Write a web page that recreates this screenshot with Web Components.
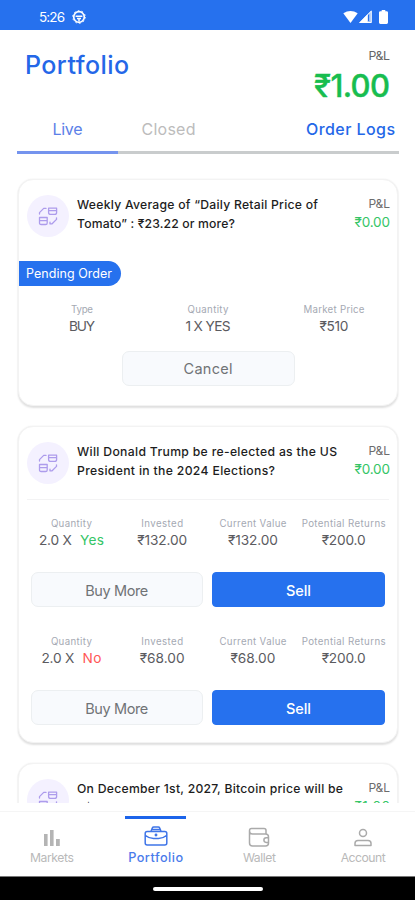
<!DOCTYPE html>
<html lang="en"><head><meta charset="utf-8"><title>Portfolio</title>
<style>html,body{margin:0;background:#fff}body{font-family:Inter,"Noto Sans",sans-serif;width:415px;height:900px;overflow:hidden}</style></head>
<body><portfolio-app></portfolio-app>
<script>
const make=(name,html,after)=>customElements.define(name,class extends HTMLElement{
  connectedCallback(){
    if(this.shadowRoot)return;
    const r=this.attachShadow({mode:'open'});
    const t=document.createElement('template');
    t.innerHTML=typeof html==='function'?html(this):html;
    r.append(t.content.cloneNode(true));
    if(after)after(this,r);
  }});
// One line of text tracked to a given width
make('fit-text',`<style>:host{display:block;white-space:nowrap;flex:none}span{display:inline-block}</style><span><slot></slot></span>`,(h,r)=>{
  const w=+h.getAttribute('w'),s=r.querySelector('span'),n=h.textContent.length;
  h.style.width=w+'px';
  const nat=s.getBoundingClientRect().width;
  if(n>1)s.style.letterSpacing=((w-nat)/(n-1)).toFixed(3)+'px';
});
make('status-bar',`<style>:host{display:flex;box-sizing:border-box;height:30px;background:#2671ee;color:#fff;padding:3px 27px 0 39px;align-items:center;justify-content:space-between;font-size:13.5px;line-height:20px}
div{display:flex;align-items:center}svg{display:block}</style>
<div style="gap:7px"><fit-text w="26">5:26</fit-text><svg width="14" height="14" viewBox="0 0 14 14" fill="none" stroke="#fff"><circle cx="7" cy="7" r="5.3" stroke-width="1.7"/><circle cx="7" cy="7" r="6.3" stroke-width="1" stroke-dasharray="1.6 2.35"/><path d="M3.6 6.2h6.8M5 8.6h4M7 8.6v3" stroke-width="1.5"/></svg></div>
<div style="gap:1px"><svg width="15" height="14" viewBox="0 0 15 14"><path fill="#fff" d="M.3 3.2Q7.5-1.3 14.7 3.2L7.5 13z"/></svg><svg width="13" height="13" viewBox="0 0 13 13"><path fill="#fff" fill-opacity=".55" d="M0 13 12.7 0V13z"/><path fill="#fff" d="M0 13 8.6 4.2V13z"/><path fill="none" stroke="#fff" d="M1.2 12.5 12.2 1.2v11.3z"/><path stroke="#2671ee" d="M9.5 4.6v6.4"/></svg><svg style="margin-left:6px" width="9" height="14" viewBox="0 0 9 14"><path fill="#fff" d="M2.7 0h3.6v1.2H7.6Q9 1.2 9 2.6v10Q9 14 7.6 14H1.4Q0 14 0 12.6v-10Q0 1.2 1.4 1.2h1.3z"/></svg></div>`);
make('page-head',`<style>:host{display:flex;justify-content:space-between;height:80px;padding:0 25px;box-sizing:border-box}
.t{color:#2467e8;font-size:25px;font-weight:500;line-height:30px;margin-top:19.5px}
.r{display:flex;flex-direction:column;align-items:flex-end}.p{color:#666;font-size:12.3px;line-height:16px;margin-top:18px}.v{color:#18bd4f;font-size:31px;font-weight:500;-webkit-text-stroke:.4px #18bd4f;line-height:36px;margin-top:4px}</style>
<fit-text class="t" w="104">Portfolio</fit-text><div class="r"><fit-text class="p" w="21.5">P&amp;L</fit-text><fit-text class="v" w="76">₹1.00</fit-text></div>`);
make('tab-row',`<style>:host{display:grid;grid-template-columns:101px 101px 1fr;margin:0 16px 0 17px;height:43.5px;box-sizing:border-box;border-bottom:3px solid #c9cccd;font-size:16px;line-height:20px}
div{display:flex;justify-content:center;padding-top:9px;box-sizing:border-box}.a{color:#5b80e8;height:43.5px;border-bottom:3px solid #7594ee}.c{color:#bcbcbc}.o{color:#2467e8;font-weight:500;font-size:16px;justify-content:flex-end;padding-right:4px}</style>
<div class="a"><fit-text w="30">Live</fit-text></div><div class="c"><fit-text w="54">Closed</fit-text></div><div class="o"><fit-text w="89">Order Logs</fit-text></div>`);
make('market-icon',`<style>:host{display:flex;flex:none;width:42px;height:42px;border-radius:50%;background:#f4f1ff;align-items:center;justify-content:center}</style>
<svg width="20" height="20" viewBox="0 0 20 20" fill="none" stroke="#ad9cec" stroke-width="1.3" stroke-linecap="round" stroke-linejoin="round"><path d="M1.5 8V6.6l4.2-4.2H8M10.6 2.2h8v4.2q0 2-2 2h-4q-2 0-2-2zM10.6 4.7h8M1.5 11.5h7.7v5.4q0 1.6-1.6 1.6H3.1q-1.6 0-1.6-1.6zM1.5 14.6h7.7M18.5 11.8v1.600l-4.400 4.400h-2.200M12 16.200v1.700h1.800"/></svg>`);
make('market-head',h=>`<style>:host{display:flex;height:57px;padding:0 7px 0 8px}
.q{margin-left:8px;flex:1;font-size:12.2px;font-weight:550;line-height:19.2px;color:#1d1d1d}.r{display:flex;flex-direction:column;align-items:flex-end}.p{font-size:12px;color:#6c6c6c;line-height:18px}.v{font-size:13.5px;color:#35c566;line-height:19px}</style>
<market-icon></market-icon><div class="q"><slot></slot></div><div class="r"><fit-text class="p" w="21.5">P&amp;L</fit-text><fit-text class="v" w="35.5">${h.getAttribute('pnl')}</fit-text></div>`);
make('market-card',`<style>:host{display:block;box-sizing:border-box;border:1px solid #f3f3f3;border-width:1px 1.5px 1px 1px;border-radius:15px;background:#fff;padding-top:15px;box-shadow:0 1.5px 2px #e0e0e0,0 0 2px #f0f0f0;width:380px;flex:none}</style><slot></slot>`);
make('stat-cell',h=>`<style>:host{display:flex;flex-direction:column;align-items:center}.l{font-size:9.7px;line-height:14px;color:#a5a9b3}.v{display:flex;gap:8px;font-size:13.7px;line-height:19px;color:#5b5b5f}</style>
<fit-text class="l" w="${h.getAttribute('lw')}">${h.getAttribute('label')}</fit-text><div class="v"><slot></slot></div>`);
make('stat-row',`<style>:host{display:grid;grid-auto-flow:column;grid-auto-columns:1fr;height:33px}</style><slot></slot>`);
make('action-button',`<style>:host{display:flex;box-sizing:border-box;height:35px;border:1.5px solid #eceff1;border-radius:7px;background:#f8fafd;color:#707376;font-size:14.5px;align-items:center;justify-content:center;line-height:20px;padding-top:2px}
:host([primary]){background:#2671ee;border-color:#2671ee;border-radius:4px;color:#fff;font-weight:500}</style><slot></slot>`);
make('order-tag',`<style>:host{display:flex;width:102px;height:25px;box-sizing:border-box;background:#2671ee;border-radius:0 12.5px 12.5px 0;color:#fff;font-size:12.5px;line-height:25px;padding:0 0 0 7px}</style><slot></slot>`);
make('position-block',h=>{const v=h.getAttribute('value'),w=h.getAttribute('vw'),s=h.getAttribute('side'),y=s==='Yes';return `<style>:host{display:block;height:118px}stat-row{margin:0 8px 0 7px}.b{display:grid;grid-template-columns:172.5px 173px;gap:9px;margin:22px 0 0 11.5px}.s{color:${y?'#35c566':'#ff5757'}}</style>
<stat-row><stat-cell label="Quantity" lw="41"><fit-text w="33">2.0 X</fit-text><fit-text class="s" w="${y?24:19}">${s}</fit-text></stat-cell><stat-cell label="Invested" lw="42"><fit-text w="${w}">${v}</fit-text></stat-cell><stat-cell label="Current Value" lw="67"><fit-text w="${w}">${v}</fit-text></stat-cell><stat-cell label="Potential Returns" lw="84"><fit-text w="44">₹200.0</fit-text></stat-cell></stat-row>
<div class="b"><action-button><fit-text w="63">Buy More</fit-text></action-button><action-button primary><fit-text w="25">Sell</fit-text></action-button></div>`});
const icons={
 Markets:'<path fill="#b4b4b4" stroke="none" d="M4 8h3.6v12H4zM10 4h3.6v16H10zM16 13h3.8v7H16z"/>',
 Portfolio:'<path d="M3.2 6.5h17.6q2 0 2 2V18q0 2-2 2H3.2q-2 0-2-2V8.500q0-2 2-2zM7 6.300 8.300 3q.4-1 1.400-1h4.600q1 0 1.400 1L17 6.300M1.500 10.500Q5 13.500 9.500 13.500h5q4.500 0 8-3M8 4.500h8"/><circle cx="12" cy="10" r=".7"/>',
 Wallet:'<path d="M19 8V4.500Q19 2.500 17 2.500H4.500Q2.500 2.500 2.500 4.700V17q0 3 3 3h13q3 0 3-3v-6q0-3-3-3H5.500Q2.500 8 2.500 5M21.500 11.800h-2.300a2.300 2.300 0 0 0 0 4.600h2.300"/>',
 Account:'<circle cx="12" cy="7" r="3.500"/><path d="M4 19.500v-2.200Q4 14.500 7 14.500h10q3 0 3 2.800v2.200z"/>'};
make('nav-item',h=>`<style>:host{display:flex;flex-direction:column;align-items:center;color:#b9b9b9;font-size:12.2px;line-height:16px}svg{margin:7px 0 2px;display:block}i{height:3.500px;width:61px;margin-top:3.5px}
:host([active]){color:#4a7beb;font-weight:500;font-size:12.7px}:host([active]) i{background:#1c64ea}:host([active]) svg{margin:5.500px 0 3.500px}</style><i></i><svg width="24" height="22" viewBox="0 0 24 22" fill="none" stroke="${h.hasAttribute('active')?'#3f75e8':'#aaa'}" stroke-width="1.500" stroke-linejoin="round">${icons[h.getAttribute('name')]}</svg><fit-text w="${h.getAttribute('w')}">${h.getAttribute('name')}</fit-text>`);
make('bottom-nav',`<style>:host{display:grid;grid-template-columns:repeat(4,1fr);height:64px;border-top:1px solid #f5f5f5;box-sizing:content-box}</style>
<nav-item name="Markets" w="44"></nav-item><nav-item name="Portfolio" w="55" active></nav-item><nav-item name="Wallet" w="33"></nav-item><nav-item name="Account" w="45"></nav-item>`);
make('gesture-bar',`<style>:host{display:flex;height:24px;background:#000;border-top:1px solid #777;box-sizing:border-box;justify-content:center;padding-top:9.500px}i{width:110px;height:4px;border-radius:2px;background:#fff}</style><i></i>`);
make('portfolio-app',`<style>:host{display:flex;flex-direction:column;width:415px;height:900px;background:#fff}
main{height:649.500px;overflow:hidden;display:flex;flex-direction:column;gap:20px;padding:25.500px 17px 0 18px;box-sizing:border-box;margin-bottom:8px;flex:none}
.c1{height:227px}.c2{height:317px}.c3{height:200px}
order-tag{margin-top:9px}.s1{margin-top:17px}.cancel{width:173px;margin:14.500px auto 0}hr{border:0;height:1px;background:#f3f3f4;margin:0 8px 17px}</style>
<status-bar></status-bar><page-head></page-head><tab-row></tab-row>
<main>
<market-card class="c1"><market-head pnl="₹0.00"><fit-text w="241">Weekly Average of “Daily Retail Price of</fit-text><fit-text w="158">Tomato” : ₹23.22 or more?</fit-text></market-head><order-tag><fit-text w="86">Pending Order</fit-text></order-tag>
<stat-row class="s1"><stat-cell label="Type" lw="22"><fit-text w="26">BUY</fit-text></stat-cell><stat-cell label="Quantity" lw="41"><fit-text w="45">1 X YES</fit-text></stat-cell><stat-cell label="Market Price" lw="61"><fit-text w="29">₹510</fit-text></stat-cell></stat-row>
<action-button class="cancel"><fit-text w="49">Cancel</fit-text></action-button></market-card>
<market-card class="c2"><market-head pnl="₹0.00"><fit-text w="260">Will Donald Trump be re-elected as the US</fit-text><fit-text w="198">President in the 2024 Elections?</fit-text></market-head><hr><position-block side="Yes" value="₹132.00" vw="50"></position-block><position-block side="No" value="₹68.00" vw="45"></position-block></market-card>
<market-card class="c3"><market-head pnl="₹1.00"><fit-text w="266">On December 1st, 2027, Bitcoin price will be</fit-text><fit-text w="122">: $1,067.73 or more?</fit-text></market-head></market-card>
</main><bottom-nav></bottom-nav><gesture-bar></gesture-bar>`);
</script></body></html>
